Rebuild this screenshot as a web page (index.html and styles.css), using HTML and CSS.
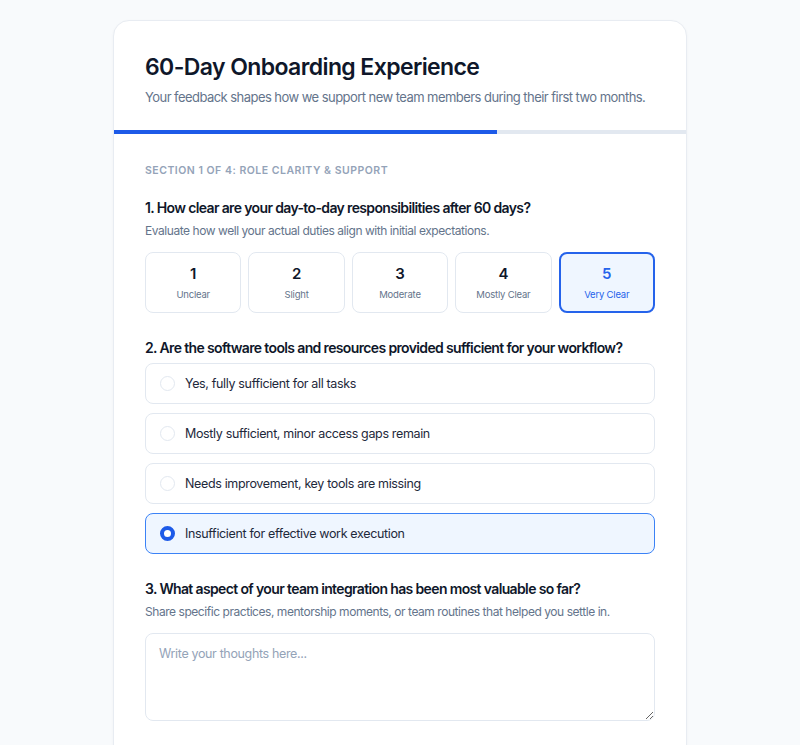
FILE: index.html
```html
<!DOCTYPE html>
<html lang="en">
<head>
<meta charset="utf-8">
<title>60-Day Onboarding Experience</title>
<link rel="stylesheet" href="styles.css">
</head>
<body>
<main class="card">
  <header class="card-header">
    <h1 class="title">60-Day Onboarding Experience</h1>
    <p class="subtitle">Your feedback shapes how we support new team members during their first two months.</p>
  </header>
  <div class="progress"><div class="progress-fill" style="width: 67%"></div></div>
  <section class="card-body">
    <div class="section-label">Section 1 of 4: Role Clarity &amp; Support</div>

    <div class="question">
      <h2 class="q-title">1. How clear are your day-to-day responsibilities after 60 days?</h2>
      <p class="q-hint">Evaluate how well your actual duties align with initial expectations.</p>
      <div class="scale">
        <div class="scale-item"><span class="scale-num">1</span><span class="scale-label">Unclear</span></div>
        <div class="scale-item"><span class="scale-num">2</span><span class="scale-label">Slight</span></div>
        <div class="scale-item"><span class="scale-num">3</span><span class="scale-label">Moderate</span></div>
        <div class="scale-item"><span class="scale-num">4</span><span class="scale-label">Mostly Clear</span></div>
        <div class="scale-item selected"><span class="scale-num">5</span><span class="scale-label">Very Clear</span></div>
      </div>
    </div>

    <div class="question">
      <h2 class="q-title q-title-tight">2. Are the software tools and resources provided sufficient for your workflow?</h2>
      <div class="options">
        <div class="option"><span class="radio"></span><span class="option-text">Yes, fully sufficient for all tasks</span></div>
        <div class="option"><span class="radio"></span><span class="option-text">Mostly sufficient, minor access gaps remain</span></div>
        <div class="option"><span class="radio"></span><span class="option-text">Needs improvement, key tools are missing</span></div>
        <div class="option selected"><span class="radio"></span><span class="option-text">Insufficient for effective work execution</span></div>
      </div>
    </div>

    <div class="question">
      <h2 class="q-title">3. What aspect of your team integration has been most valuable so far?</h2>
      <p class="q-hint">Share specific practices, mentorship moments, or team routines that helped you settle in.</p>
      <textarea class="answer" placeholder="Write your thoughts here..."></textarea>
    </div>
  </section>
</main>
</body>
</html>
```

FILE: styles.css
```css
* { box-sizing: border-box; }

body {
  margin: 0;
  padding: 20px 0 0;
  background: #f8fafc;
  font-family: "Inter", "Liberation Sans", sans-serif;
  color: #0f172a;
}

.card {
  width: 574px;
  margin: 0 auto;
  background: #ffffff;
  border: 1px solid #e8ecf2;
  border-radius: 16px;
  overflow: hidden;
  box-shadow: 0 1px 3px rgba(15, 23, 42, 0.04);
}

.card-header {
  padding: 32px 31px 23px;
}

.title {
  margin: 0;
  font-size: 23px;
  line-height: 28px;
  font-weight: 600;
  letter-spacing: -0.6px;
  color: #0f172a;
}

.subtitle {
  margin: 6px 0 0;
  font-size: 13px;
  line-height: 20px;
  color: #64748b;
  letter-spacing: -0.55px;
}

.progress {
  height: 4px;
  background: #e2e8f0;
}

.progress-fill {
  height: 100%;
  background: #1d5ae8;
}

.card-body {
  padding: 29px 31px 24px;
}

.section-label {
  font-size: 10.5px;
  line-height: 16px;
  font-weight: 600;
  letter-spacing: 0.5px;
  text-transform: uppercase;
  color: #94a3b8;
  margin-bottom: 19px;
}

.question { margin-bottom: 25px; }

.q-title {
  margin: 0;
  font-size: 14px;
  line-height: 20px;
  font-weight: 600;
  letter-spacing: -0.64px;
  color: #0f172a;
}

.q-title-tight { margin-bottom: 5px; }

.q-hint {
  margin: 4px 0 12px;
  font-size: 12px;
  line-height: 18px;
  color: #64748b;
  letter-spacing: -0.45px;
}

.scale {
  display: grid;
  grid-template-columns: repeat(5, 1fr);
  gap: 7px;
}

.scale-item {
  height: 61px;
  border: 1px solid #e2e8f0;
  border-radius: 8px;
  background: #fff;
  display: flex;
  flex-direction: column;
  align-items: center;
  justify-content: center;
  gap: 5px;
}

.scale-num {
  font-size: 15px;
  line-height: 18px;
  font-weight: 600;
  color: #0f172a;
}

.scale-label {
  font-size: 9.5px;
  line-height: 13px;
  color: #64748b;
  letter-spacing: -0.2px;
}

.scale-item.selected {
  border: 2px solid #2563eb;
  background: #eff6ff;
}

.scale-item.selected .scale-num,
.scale-item.selected .scale-label { color: #2563eb; }

.options {
  display: flex;
  flex-direction: column;
  gap: 9px;
}

.option {
  height: 41px;
  border: 1px solid #e2e8f0;
  border-radius: 8px;
  background: #fff;
  display: flex;
  align-items: center;
  padding: 0 14px;
  gap: 10px;
}

.radio {
  width: 15px;
  height: 15px;
  border: 1.5px solid #e2e8f0;
  border-radius: 50%;
  background: #fff;
  flex: none;
}

.option-text {
  font-size: 12.5px;
  color: #1e293b;
  letter-spacing: -0.35px;
}

.option.selected {
  border-color: #3b82f6;
  background: #eff6ff;
}

.option.selected .radio {
  border: 4px solid #1d5ae8;
  background: #fff;
}

.answer {
  display: block;
  width: 100%;
  height: 88px;
  border: 1px solid #e2e8f0;
  border-radius: 8px;
  padding: 12px 13px;
  font-family: inherit;
  font-size: 12.5px;
  letter-spacing: -0.35px;
  color: #1e293b;
  resize: vertical;
  background: #fff;
}

.answer::placeholder { color: #94a3b8; }
```
